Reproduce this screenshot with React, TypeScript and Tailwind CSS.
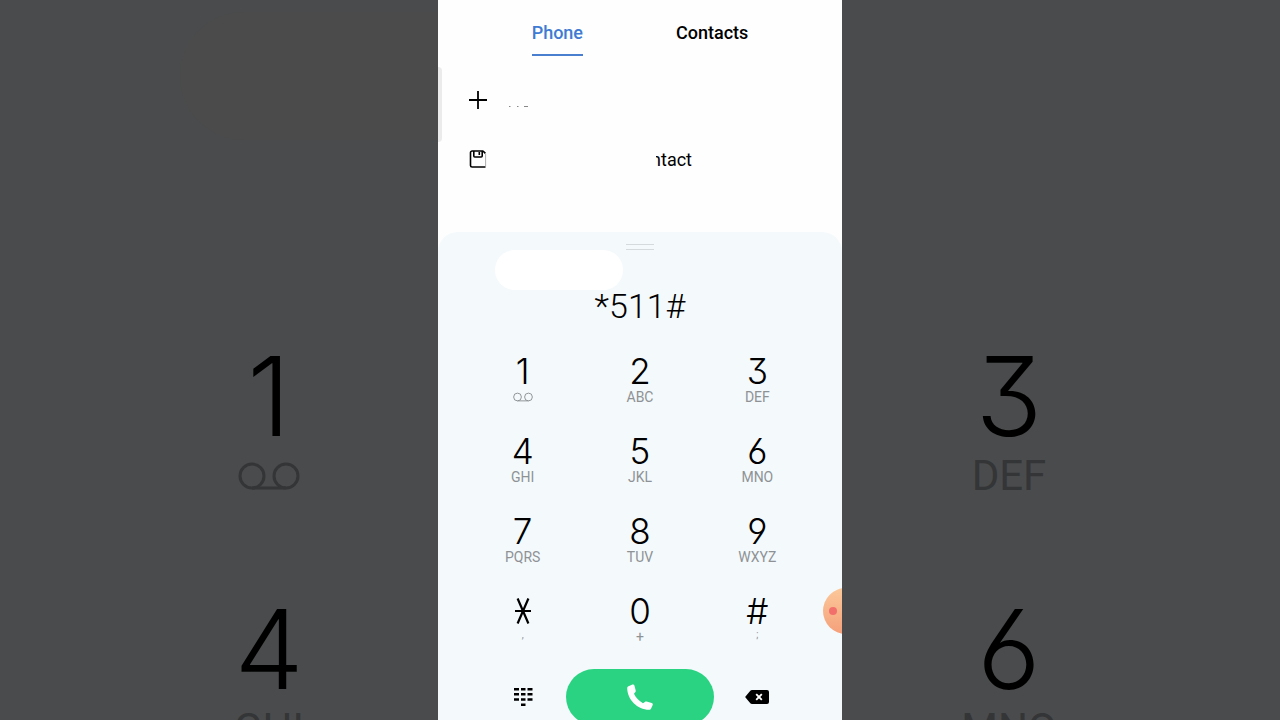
import React from "react";

type Key = { digit: string; sub: string };

const KEYS: Key[] = [
  { digit: "1", sub: "voicemail" },
  { digit: "2", sub: "ABC" },
  { digit: "3", sub: "DEF" },
  { digit: "4", sub: "GHI" },
  { digit: "5", sub: "JKL" },
  { digit: "6", sub: "MNO" },
  { digit: "7", sub: "PQRS" },
  { digit: "8", sub: "TUV" },
  { digit: "9", sub: "WXYZ" },
  { digit: "*", sub: "," },
  { digit: "0", sub: "+" },
  { digit: "#", sub: ";" },
];

function Voicemail({ className }: { className: string }) {
  return (
    <svg viewBox="0 0 62 28" className={className} fill="none" stroke="currentColor" strokeWidth="3" aria-hidden="true">
      <circle cx="14" cy="14" r="12" />
      <circle cx="48" cy="14" r="12" />
      <path d="M14 26h34" />
    </svg>
  );
}

function Star() {
  return (
    <svg viewBox="0 0 16 26" className="h-[26px] w-4" stroke="currentColor" strokeWidth="2.2" aria-hidden="true">
      <path d="M2.6 0.5 13.4 25.5M13.4 0.5 2.6 25.5M0 13h16" />
    </svg>
  );
}

function DialKey({ digit, sub }: Key) {
  const minor = sub === "," || sub === ";";
  return (
    <button type="button" aria-label={digit} className="flex flex-col items-center">
      <span className="flex h-9 items-center font-[Inter,sans-serif] text-[35px] leading-9 font-light [font-feature-settings:'cv03','cv04','cv09']">
        {digit === "*" ? <Star /> : digit}
      </span>
      <span className={minor ? "flex h-4 items-start text-[10px] leading-3 text-[#8e9295]" : "flex h-4 items-center text-sm leading-4 text-[#8e9295]"}>
        {sub === "voicemail" ? <Voicemail className="h-[10px] w-5" /> : sub}
      </span>
    </button>
  );
}

function LargeKey({ digit, sub }: Key) {
  return (
    <div className="flex h-[253px] w-[200px] flex-col items-center">
      <span className="h-[112px] font-[Inter,sans-serif] text-[110px] leading-[112px] font-light text-black [font-feature-settings:'cv03','cv04','cv09']">
        {digit}
      </span>
      <span className="flex h-12 items-center text-[42px] leading-[52px] text-[#333536]">
        {sub === "voicemail" ? <Voicemail className="h-7 w-[62px]" /> : sub}
      </span>
    </div>
  );
}

export default function App() {
  return (
    <div className="flex h-screen justify-center overflow-hidden bg-[#4a4b4c] font-[Roboto,sans-serif] text-black">
      <aside aria-hidden="true" className="flex min-w-0 flex-1 flex-col items-end overflow-hidden">
        <div className="mt-3 h-32 w-[258px] shrink-0 rounded-l-full bg-[#4b4b4b]" />
        <div className="mt-[200px] mr-[69px]">
          <LargeKey digit="1" sub="voicemail" />
          <LargeKey digit="4" sub="GHI" />
        </div>
      </aside>

      <main className="relative flex w-full max-w-[404px] flex-col overflow-hidden bg-[#fefefe]">
        <nav className="flex justify-center gap-[93px] pt-[21px] text-lg leading-6 font-medium">
          <a href="#phone" className="border-b-2 border-[#4a7fd0] pb-[9px] text-[#3f7bd3]">
            Phone
          </a>
          <a href="#contacts">Contacts</a>
        </nav>

        <div className="flex h-44 shrink-0 flex-col px-[31px] pt-8">
          <button type="button" aria-label="New contact" className="flex h-6 items-center gap-[21px]">
            <svg viewBox="0 0 18 18" className="h-[18px] w-[18px]" stroke="currentColor" strokeWidth="1.8" aria-hidden="true">
              <path d="M9 0v18M0 9h18" />
            </svg>
            <svg viewBox="0 0 20 14" className="h-[14px] w-5" stroke="#888" strokeWidth="1" aria-hidden="true">
              <path d="M1 13.5h1.5M9 13.5h1.5M16 13.5h4" />
            </svg>
          </button>
          <button type="button" aria-label="Save contact" className="mt-9 flex h-6 items-center">
            <svg viewBox="0 0 18 20" className="h-5 w-[18px]" fill="none" stroke="currentColor" strokeWidth="1.6" aria-hidden="true">
              <path d="M14.2 1H3.1A1.6 1.6 0 0 0 1.5 2.6v12.800A1.600 1.600 0 0 0 3.100 17H16.500M4.800 1v5a1 1 0 0 0 1 1h6.400a1 1 0 0 0 1-1V1M10.300 2v3M14 1l2.400 2.400" />
              <path d="M16.6 4v12.500" strokeWidth="0.6" stroke="#777" />
            </svg>
            <span className="ml-[169px] flex w-9 justify-end overflow-hidden text-lg leading-6">ntact</span>
          </button>
        </div>

        <section className="flex flex-1 flex-col rounded-t-[20px] bg-[#f4f9fc]">
          <div className="mx-auto mt-3 h-[6px] w-7 shrink-0 border-y border-[#d5dadd]" />
          <div className="ml-[57px] h-10 w-32 shrink-0 rounded-full bg-white" />
          <output className="block text-center text-[34px] leading-8 font-light">*511#</output>

          <div className="mt-[31px] grid grid-cols-3 gap-y-7 px-[26px]">
            {KEYS.map((key) => (
              <DialKey key={key.digit} {...key} />
            ))}
          </div>

          <div className="mt-6 grid grid-cols-[1fr_148px_1fr] items-center">
            <button type="button" aria-label="Keypad" className="flex justify-end pr-[33px]">
              <svg viewBox="0 0 20 20" className="h-5 w-5" fill="currentColor" aria-hidden="true">
                <path d="M1 1h5v2.400H1zM8 1h4.500v2.400H8zM14.500 1h5v2.400h-5zM1 6h5v2.400H1zM8 6h4.500v2.400H8zM14.500 6h5v2.400h-5zM1 11.300h5v2.400H1zM8 11.300h4.500v2.400H8zM14.500 11.300h5v2.400h-5zM8 16.500h4.500v2.400H8z" />
              </svg>
            </button>
            <button type="button" aria-label="Call" className="flex h-14 items-center justify-center rounded-full bg-[#2ad382] text-white">
              <svg viewBox="0 0 26 26" className="h-[26px] w-[26px]" fill="currentColor" aria-hidden="true">
                <path d="M1 2.600 5.400.6c.9-.4 1.700 0 2 .8l1.300 5.200c.2.800 0 1.300-.5 1.700L7 9.700c1.600 3.700 5 7.300 9 9.500l1.900-1.300c.5-.4 1.100-.5 1.700-.3l5.100 1.500c.9.3 1.200 1 1 1.800l-1.600 3.600c-.4.900-1 1.300-1.900 1.300C10.300 25.800.3 15.200.2 4.200c0-.7.200-1.300.8-1.600z" />
              </svg>
            </button>
            <button type="button" aria-label="Delete" className="flex pl-[31px]">
              <svg viewBox="0 0 24 16" className="h-4 w-6" aria-hidden="true">
                <path fill="currentColor" d="M7 1h15A2 2 0 0 1 24 3v10A2 2 0 0 1 22 15H7c-.7 0-1.300-.3-1.700-.8L.5 8.600a1 1 0 0 1 0-1.200l4.800-5.600C5.700 1.300 6.300 1 7 1z" />
                <path stroke="#fff" strokeWidth="1.900" d="m11.200 5.200 5.600 5.600M16.800 5.200 11.200 10.800" />
              </svg>
            </button>
          </div>
        </section>

        <div className="absolute top-[67px] left-0 h-[75px] w-1 rounded-r bg-[#ebebeb]" />
        <div className="absolute top-[588px] -right-[27px] flex h-[46px] w-[46px] items-center rounded-full bg-linear-to-b from-[#fbc89a] to-[#f5a07a] pl-[6px]">
          <span className="h-2 w-2 rounded-full bg-[#f2706c]" />
        </div>
      </main>

      <aside aria-hidden="true" className="flex min-w-0 flex-1 flex-col items-start overflow-hidden">
        <div className="mt-[340px] ml-[67px]">
          <LargeKey digit="3" sub="DEF" />
          <LargeKey digit="6" sub="MNO" />
        </div>
      </aside>
    </div>
  );
}
